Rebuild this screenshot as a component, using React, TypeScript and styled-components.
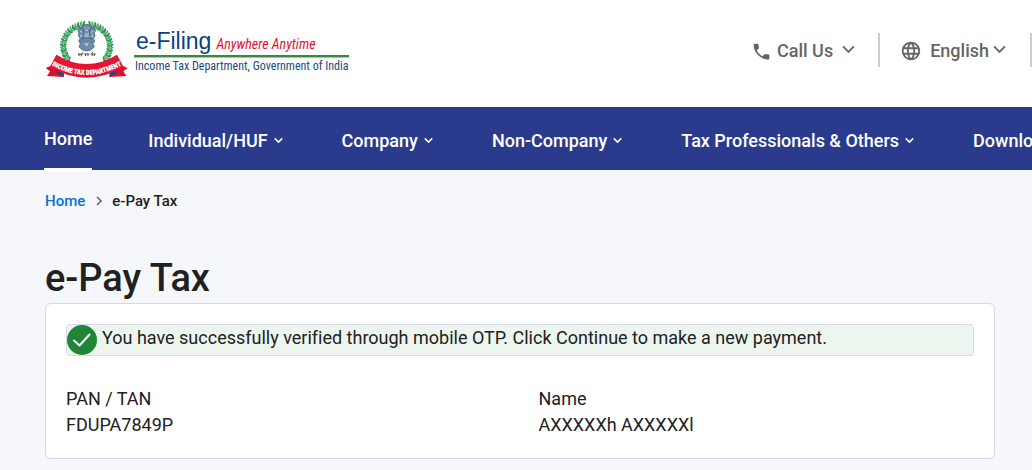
import React from 'react';
import styled, { createGlobalStyle } from 'styled-components';
import { MdPhone, MdLanguage } from 'react-icons/md';

const GlobalStyle = createGlobalStyle`
  *, *::before, *::after { box-sizing: border-box; }
  html { min-height: 100%; background: #f5f7fb; }
  body {
    margin: 0;
    overflow-x: hidden;
    color: #212121;
    font-family: Roboto, "Liberation Sans", sans-serif;
    font-size: 18px;
    font-variant-ligatures: none;
  }
  h1, p, dl, dd, ol, ul { margin: 0; padding: 0; }
  a { text-decoration: none; }
  button { border: 0; padding: 0; background: none; font: inherit; color: inherit; cursor: pointer; }
`;

const Header = styled.header`
  display: flex;
  justify-content: space-between;
  align-items: flex-start;
  padding: 20px 0 22px 44px;
  min-height: 107px;
  background: #fff;
`;

const Brand = styled.a`
  display: flex;
  gap: 5px;
  color: #1c4a7c;
`;

const BrandText = styled.span`
  display: flex;
  flex-direction: column;
  padding-top: 8px;
  white-space: nowrap;
`;

const BrandName = styled.span`
  display: flex;
  align-items: baseline;
  gap: 5px;
  height: 27px;
  padding-left: 2px;
  color: #0b3f85;
  font: 23px/27px "Liberation Sans", Arial, sans-serif;
`;

const Motto = styled.span`
  color: #e4112b;
  font: italic 14px/27px "Roboto Condensed", Roboto, sans-serif;
`;

const Department = styled.span`
  border-top: 2px solid #2f8f3b;
  padding-left: 1px;
  box-shadow: inset 0 1px 0 #9bcf9f;
  font: 12px/18px "Roboto Condensed", Roboto, sans-serif;
`;

const Tools = styled.div`
  display: flex;
  align-items: center;
  height: 34px;
  margin-top: 13px;
  color: #666;
  white-space: nowrap;
`;

const ToolButton = styled.button<{ $gap: number }>`
  display: flex;
  align-items: center;
  padding-top: 2px;
  font-weight: 500;
  line-height: 24px;

  & > span { margin: 0 ${p => p.$gap}px 0 5px; }
  & > svg:first-child + span { padding-left: ${p => (p.$gap > 6 ? 0 : 3)}px; }
  & > svg:last-child { margin-bottom: 4px; }
`;

const Divider = styled.span<{ $before: number; $after: number }>`
  width: 2px;
  height: 34px;
  margin: 0 ${p => p.$after}px 0 ${p => p.$before}px;
  background: #ccc;
`;

const Nav = styled.nav`
  overflow-x: clip;
  background: #2a3b8d;
  color: #fff;
`;

const NavList = styled.ul`
  display: flex;
  gap: 56px;
  height: 63px;
  padding-left: 44px;
  list-style: none;
  white-space: nowrap;
`;

const NavItem = styled.li`
  display: flex;
  flex: none;
`;

const NavHome = styled.a`
  height: 64px;
  border-bottom: 3px solid #fff;
  color: #fff;
  font-weight: 500;
  line-height: 64px;
`;

const NavButton = styled.button`
  display: flex;
  align-items: center;
  gap: 6px;
  padding: 4px 3px 0 0;
  font-weight: 500;
`;

const Main = styled.main`
  padding: 20px 37px 11px 45px;
`;

const Crumbs = styled.ol`
  display: flex;
  align-items: center;
  list-style: none;
  font-size: 15px;
  font-weight: 500;
  line-height: 22px;

  a { color: #0b6fd6; }
  svg { display: block; margin: 0 9px 0 10px; }
`;

const Crumb = styled.li`
  display: flex;
  align-items: center;
`;

const Title = styled.h1`
  margin-top: 41px;
  font-size: 38px;
  font-weight: 500;
  line-height: 50px;
`;

const Card = styled.section`
  padding: 20px;
  border: 1px solid #d6d9ea;
  border-radius: 6px;
  background: #fff;
`;

const Notice = styled.div`
  display: flex;
  gap: 4px;
  min-height: 32px;
  border: 1px solid #d6d9ea;
  border-radius: 4px;
  background: #edf6ee;
  line-height: 26px;

  svg { flex: none; }
`;

const Details = styled.dl`
  display: grid;
  grid-template-columns: 1fr 1fr;
  column-gap: 37px;
  margin-top: 30px;
  line-height: 26px;
`;

const Chevron = ({ size }: { size: number }) => (
  <svg width={size} height={size} viewBox="0 0 12 12" fill="none" stroke="currentColor" strokeWidth={size > 10 ? 1.7 : 2} aria-hidden="true">
    <path d="M1 3.2 6 8.2 11 3.2" />
  </svg>
);

const leaves = Array.from({ length: 19 }, (_, i) => i);

const Emblem = () => (
  <svg width="85" height="60" viewBox="24 30 255 180" role="img" aria-label="Income Tax Department">
    {[-1, 1].map(side => (
      <g key={side} transform={side === 1 ? 'translate(304 0) scale(-1 1)' : undefined}>
        <path d="M140 45C88 52 62 102 88 152" fill="none" stroke="#3f9c5c" strokeWidth="3" />
        {leaves.map(i => {
          const turn = -100 - i * 6.8;
          const a = (turn * Math.PI) / 180;
          const x = 152 + Math.cos(a) * 70;
          const y = 108 + Math.sin(a) * 65;
          return (
            <g key={i} transform={`translate(${x} ${y}) rotate(${turn})`} fill={i % 2 ? '#54ae70' : '#2e9150'}>
              <ellipse cx="6" cy="1" rx="7" ry="3" transform="rotate(35)" />
              <ellipse cx="-6" cy="1" rx="7" ry="3" transform="rotate(-35)" />
            </g>
          );
        })}
      </g>
    ))}
    <g fill="#6f8daa" stroke="#31516f" strokeWidth="2">
      <path d="M141 46q11-7 22 0l4 10-3 30h-24l-3-30z" />
      <path d="M139 54q-11-3-14 7l4 8-2 8 6 10h9l2-25z" />
      <path d="M165 54q11-3 14 7l-4 8 2 8-6 10h-9l-2-25z" />
      <path d="M129 89h46v8h-46zM134 98q18 9 36 0l5 13q-23 24-46 0z" />
    </g>
    <path d="M146 54h3m6 0h3M148 61h8M145 69l7 5 7-5M143 78h18M132 64l6 3m34-3-6 3M135 73v9m34-9v9" stroke="#e1ebf3" strokeWidth="2.4" fill="none" />
    <circle cx="152" cy="104" r="4" fill="#dce8f1" stroke="#31516f" />
    <path d="M126 132h15m4 0h15m4 0h15M129 132v6m7-6v7m12-7v6m8-6v6m12-6v6m7-6v6M139 127l4 3m24-4 4 3" stroke="#252525" strokeWidth="2.5" />
    <path d="M48 166 29 174 42 184 33 198 84 201 78 180zM256 166l19 8-13 10 9 14-51 3 6-21z" fill="#df1027" />
    <path d="M56 178l28 8-1 15-20-11zM248 178l-28 8 1 15 20-11z" fill="#13489b" />
    <path d="M61 134Q152 190 243 134L263 172Q152 234 41 172Z" fill="#e41530" />
    <path id="ribbon-line" d="M46 165Q152 224 258 165" fill="none" />
    <text fill="#fff" stroke="#fff" strokeWidth="0.8" fontFamily="Roboto Condensed, Roboto, sans-serif" fontSize="20" fontWeight="700" textAnchor="middle">
      <textPath href="#ribbon-line" startOffset="50%">INCOME TAX DEPARTMENT</textPath>
    </text>
  </svg>
);

const menus = ['Individual/HUF', 'Company', 'Non-Company', 'Tax Professionals & Others', 'Downloads'];

const details = [
  { label: 'PAN / TAN', value: 'FDUPA7849P' },
  { label: 'Name', value: 'AXXXXXh AXXXXXl' },
];

export default function App() {
  return (
    <>
      <GlobalStyle />
      <Header>
        <Brand href="#">
          <Emblem />
          <BrandText>
            <BrandName>e-Filing <Motto>Anywhere Anytime</Motto></BrandName>
            <Department>Income Tax Department, Government of India</Department>
          </BrandText>
        </Brand>
        <Tools>
          <ToolButton $gap={9} type="button">
            <MdPhone size={21} /><span>Call Us</span><Chevron size={13} />
          </ToolButton>
          <Divider $before={23} $after={20} />
          <ToolButton $gap={4} type="button">
            <MdLanguage size={22} /><span>English</span><Chevron size={13} />
          </ToolButton>
          <Divider $before={24} $after={0} />
        </Tools>
      </Header>
      <Nav aria-label="Main">
        <NavList>
          <NavItem><NavHome href="#">Home</NavHome></NavItem>
          {menus.map(name => (
            <NavItem key={name}>
              <NavButton type="button">{name}<Chevron size={9} /></NavButton>
            </NavItem>
          ))}
        </NavList>
      </Nav>
      <Main>
        <Crumbs aria-label="Breadcrumb">
          <Crumb>
            <a href="#">Home</a>
            <svg width="8" height="10" viewBox="0 0 8 10" fill="none" stroke="#666" strokeWidth="1.6" aria-hidden="true">
              <path d="M2 1 6 5 2 9" />
            </svg>
          </Crumb>
          <Crumb aria-current="page">e-Pay Tax</Crumb>
        </Crumbs>
        <Title>e-Pay Tax</Title>
        <Card>
          <Notice role="status">
            <svg width="31" height="30" viewBox="0 0 31 30" aria-hidden="true">
              <circle cx="15" cy="15" r="15" fill="#208637" />
              <path d="M7 15.5 12.5 20.5 22.5 9.5" fill="none" stroke="#fff" strokeWidth="2" strokeLinecap="round" strokeLinejoin="round" />
            </svg>
            <p>You have successfully verified through mobile OTP. Click Continue to make a new payment.</p>
          </Notice>
          <Details>
            {details.map(item => (
              <div key={item.label}>
                <dt>{item.label}</dt>
                <dd>{item.value}</dd>
              </div>
            ))}
          </Details>
        </Card>
      </Main>
    </>
  );
}
